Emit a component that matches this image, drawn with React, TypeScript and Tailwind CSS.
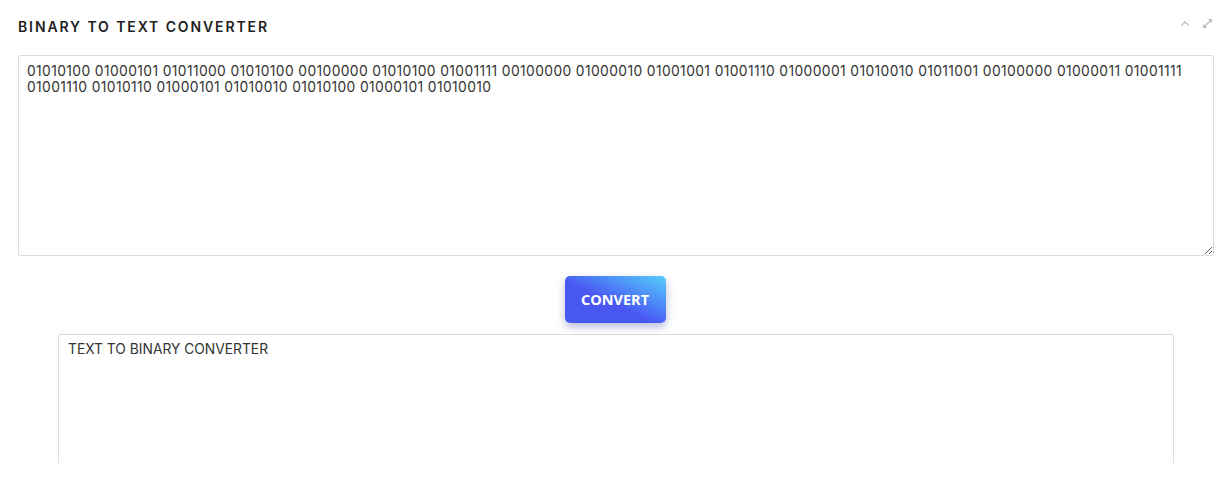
import React from 'react';

const BINARY =
  '01010100 01000101 01011000 01010100 00100000 01010100 01001111 00100000 01000010 01001001 01001110 01000001 01010010 01011001 00100000 01000011 01001111 01001110 01010110 01000101 01010010 01010100 01000101 01010010';

const ChevronUp = () => (
  <svg width="10" height="7" viewBox="0 0 10 7" fill="none" stroke="#bdbdbd" strokeWidth="1.3">
    <path d="M1.5 5.5 L5 2 L8.5 5.5" />
  </svg>
);

const Expand = () => (
  <svg width="11" height="11" viewBox="0 0 11 11" fill="#b8b8b8" stroke="#b8b8b8" strokeWidth="1.2">
    <path d="M2 9 L9 2" fill="none" />
    <path d="M6 1 L10 1 L10 5 Z" stroke="none" />
    <path d="M1 6 L1 10 L5 10 Z" stroke="none" />
  </svg>
);

export default function App() {
  return (
    <div className="bg-white w-full h-[488px] overflow-hidden">
      <div className="h-[463px] overflow-hidden pl-[18px] pr-[7px]">
        <div className="flex items-center justify-between h-[50px] pt-[2px]">
          <h2 className="text-[14px] font-semibold tracking-[0.135em] text-[#222] font-['Inter',sans-serif]">
            BINARY TO TEXT CONVERTER
          </h2>
          <div className="flex items-center gap-[12px] pr-[1px] pb-[6px]">
            <ChevronUp />
            <Expand />
          </div>
        </div>
        <textarea
          readOnly
          defaultValue={BINARY}
          className="mt-[5px] block w-full h-[201px] border border-[#dcdcdc] rounded-[2px] px-[8px] pt-[7px] text-[13.8px] leading-[16px] tracking-[0.4px] text-[#333] font-['Inter',sans-serif] outline-none"
        />
        <div className="flex justify-center mt-[20px] pr-[2px]">
          <button className="w-[101px] h-[47px] rounded-[5px] bg-linear-to-tr from-[#4a58f3] from-45% to-[#5accfb] text-white text-[14.5px] font-bold font-['Open_Sans',sans-serif] shadow-[0_4px_8px_rgba(50,60,150,0.35)]">
            CONVERT
          </button>
        </div>
        <textarea
          readOnly
          defaultValue="TEXT TO BINARY CONVERTER"
          className="mt-[11px] mx-[40px] block w-[calc(100%-80px)] h-[200px] border border-[#dcdcdc] rounded-[2px] px-[9px] pt-[6px] text-[13.8px] leading-[16px] text-[#333] font-['Inter',sans-serif] outline-none resize-none"
        />
      </div>
    </div>
  );
}
